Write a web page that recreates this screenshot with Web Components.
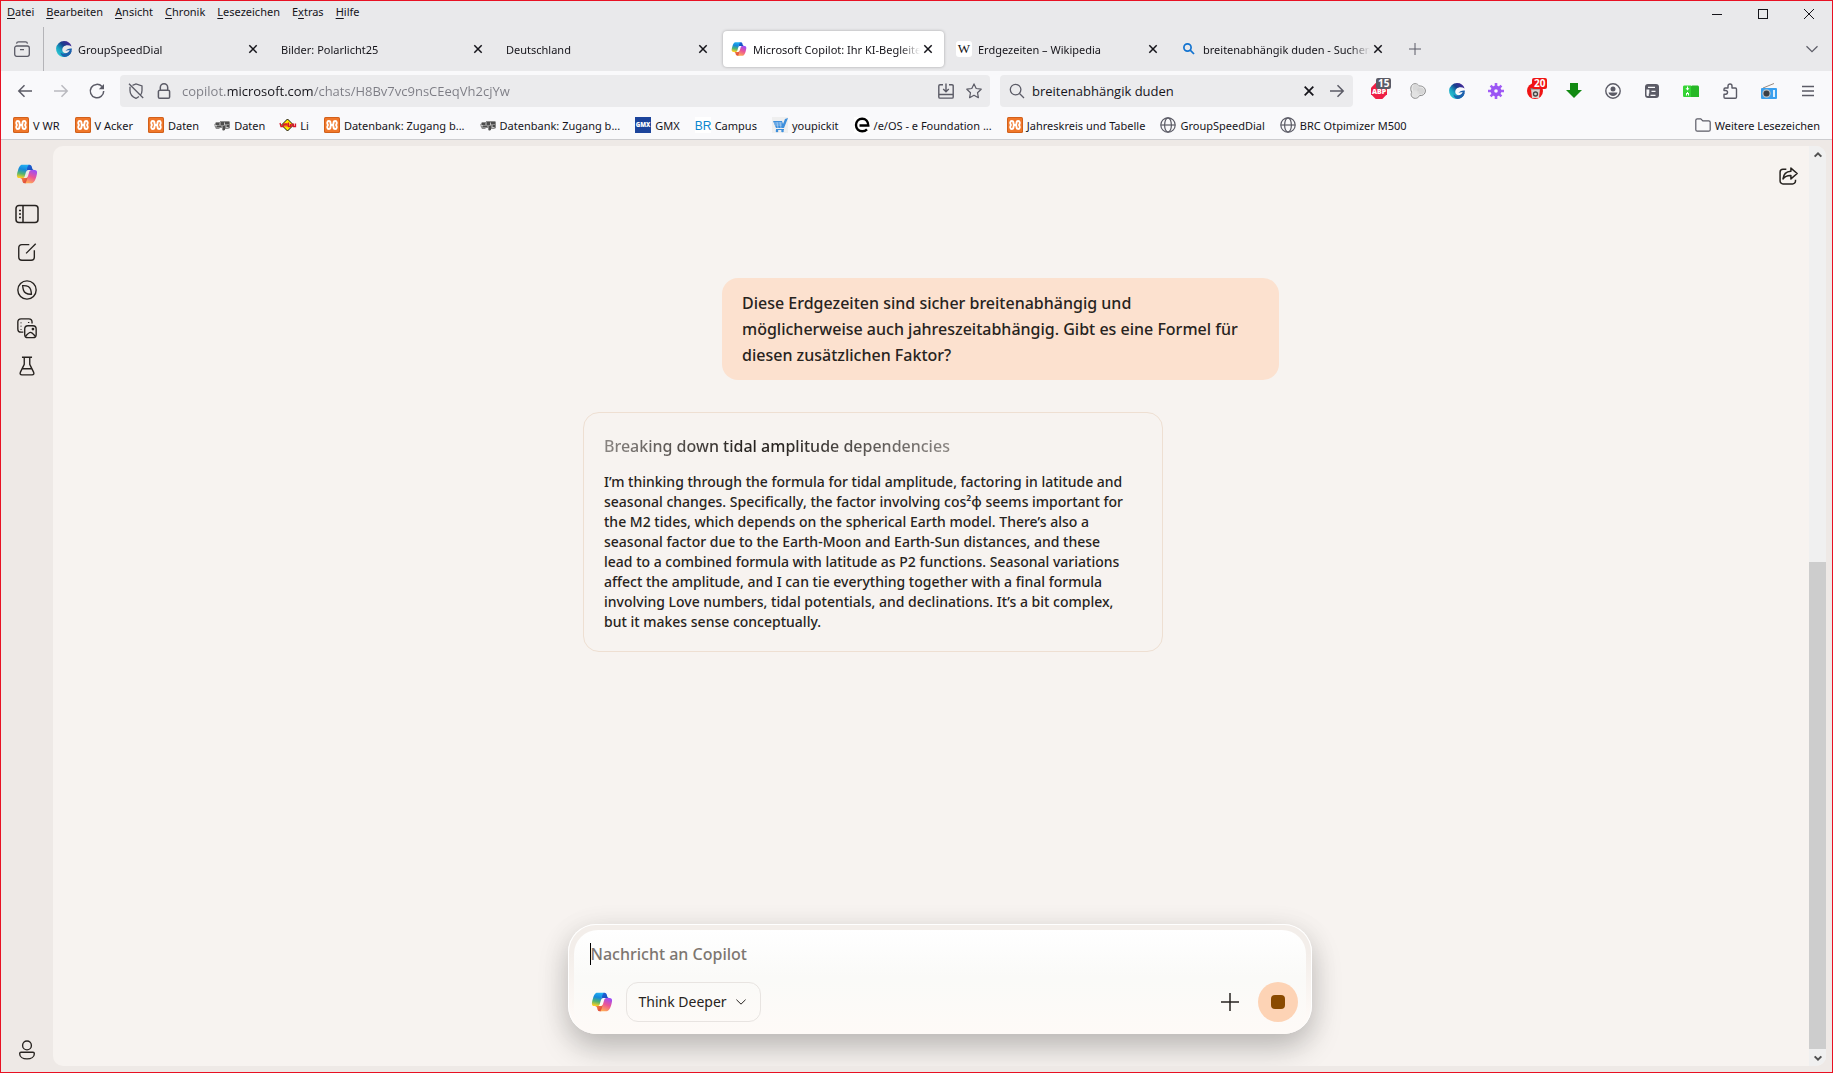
<!DOCTYPE html>
<html lang="de">
<head>
<meta charset="utf-8">
<title>Microsoft Copilot: Ihr KI-Begleiter</title>
<style>
    body { margin: 0; }
</style>
</head>
<body>
<browser-window></browser-window>

<script>
// 1. Icons
const copilotMark = `
    <defs>
        <linearGradient id="a" x1="0" y1="0" x2="1" y2="1"><stop offset="0" stop-color="#1a6be0"/><stop offset="1" stop-color="#1b3fae"/></linearGradient>
        <linearGradient id="b" x1="0" y1="0" x2="1" y2="1"><stop offset="0" stop-color="#ffa23e"/><stop offset="1" stop-color="#d8343c"/></linearGradient>
        <linearGradient id="c" x1=".6" y1="0" x2=".4" y2="1"><stop offset="0" stop-color="#22b0f2"/><stop offset=".35" stop-color="#1589dc"/><stop offset=".68" stop-color="#52b471"/><stop offset="1" stop-color="#ffd021"/></linearGradient>
        <linearGradient id="d" x1=".7" y1="0" x2=".3" y2="1"><stop offset="0" stop-color="#9a4dfa"/><stop offset=".5" stop-color="#ec5594"/><stop offset="1" stop-color="#ffad55"/></linearGradient>
    </defs>
    <path fill="url(#a)" d="M34.142 7.325A4.63 4.63 0 0 0 29.7 4h-1.35a4.63 4.63 0 0 0-4.554 3.794L21.48 20.407l.575-1.965a4.63 4.63 0 0 1 4.444-3.33h7.853l3.294 1.282 3.175-1.283h-.926a4.63 4.63 0 0 1-4.443-3.325z"/>
    <path fill="url(#b)" d="M14.33 40.656A4.63 4.63 0 0 0 18.779 44h2.87a4.63 4.63 0 0 0 4.629-4.51l.312-12.163-.654 2.233a4.63 4.63 0 0 1-4.443 3.329h-7.919l-2.823-1.532-3.057 1.532h.912a4.63 4.63 0 0 1 4.447 3.344z"/>
    <path fill="url(#c)" d="M29.5 4H13.46c-4.583 0-7.332 6.057-9.165 12.113-2.172 7.176-5.014 16.775 3.207 16.775h6.925a4.63 4.63 0 0 0 4.456-3.358 2078.617 2078.617 0 0 1 4.971-17.156c.843-2.843 1.544-5.284 2.621-6.805C27.08 4.717 28.086 4 29.5 4z"/>
    <path fill="url(#d)" d="M18.498 44h16.04c4.582 0 7.332-6.058 9.165-12.115 2.171-7.177 5.013-16.775-3.208-16.775h-6.926a4.63 4.63 0 0 0-4.455 3.358 2084.036 2084.036 0 0 1-4.972 17.159c-.842 2.843-1.544 5.285-2.62 6.806-.604.852-1.61 1.567-3.024 1.567z"/>`;

const speedDialMark = `
    <defs>
        <linearGradient id="a" x1="1" y1="0" x2="0" y2="1"><stop offset="0" stop-color="#5a1a9c"/><stop offset=".4" stop-color="#17408c"/><stop offset=".65" stop-color="#18a5c4"/><stop offset="1" stop-color="#3cd6d8"/></linearGradient>
    </defs>
    <path fill="url(#a)" d="M8 0a8 8 0 0 1 7.600 5.500C13 3.600 9.500 3.800 7.500 5.700 5.500 7.700 6 11 8.500 12c2 .8 5-.1 7.300-2A8 8 0 1 1 8 0z"/>
    <path fill="#1c62ae" d="M15.900 7.500c0 5-3.500 8.200-7.500 8.400-2.400-.5-3.800-2.300-3.900-4.300 2.500 2.200 7.700 1.400 9.200-2.500l-4.200.7c1.200-1.700 3.500-2.700 6.400-2.300z"/>`;

// name: [viewBox, markup]
const icons = {
    copilot: ['0 2 48 44', copilotMark],
    speeddial: ['0 0 16 16', speedDialMark],
    close: ['0 0 12 12', '<path class="s" stroke-width="1.500" d="M2.300 2.300l7.400 7.400M9.700 2.300l-7.400 7.400"/>'],
    plus: ['0 0 12 12', '<path class="s" d="M6 0v12M0 6h12"/>'],
    down: ['0 0 12 12', '<path class="s" stroke-width="1.200" d="M.5 3.200L6 8.600l5.500-5.400"/>'],
    minimize: ['0 0 12 12', '<path class="s" shape-rendering="crispEdges" d="M1 6.500h10"/>'],
    maximize: ['0 0 12 12', '<path class="s" shape-rendering="crispEdges" d="M1.500 1.500h9v9h-9z"/>'],
    quit: ['0 0 12 12', '<path class="s" d="M1 1l10 10M11 1L1 11"/>'],
    archive: ['0 0 16 16', '<path class="s" stroke-width="1.300" d="M.7 7A2 2 0 0 1 2.700 5h10.600a2 2 0 0 1 2 2v6.300a2 2 0 0 1-2 2H2.700a2 2 0 0 1-2-2zM2.500 2.600C2.700 1.400 3.400.8 4.500.8h7c1.100 0 1.800.6 2 1.800M6 8.600h4"/>'],
    back: ['0 0 16 16', '<path class="s" stroke-width="1.500" d="M15 8H2M7.500 2.300L1.800 8l5.700 5.700"/>'],
    forward: ['0 0 16 16', '<path class="s" stroke-width="1.500" d="M1 8h13M8.500 2.300L14.200 8l-5.700 5.700"/>'],
    reload: ['0 0 16 16', '<path class="s" stroke-width="1.500" d="M13 3.600A6.700 6.700 0 1 0 14.700 8"/><path fill="currentColor" d="M15 1v5.200H9.800z"/>'],
    shield: ['0 0 16 16', '<path class="s" stroke-width="1.300" d="M4.500 2.300L8 1l6 2v4.500c0 1.700-.5 3.100-1.400 4.300M10.900 13.500C10 14.300 9 14.900 8 15.300 4.700 14 2 11 2 7.500V3.700M1 .8l14.200 14.200"/>'],
    lock: ['0 0 16 16', '<path class="s" stroke-width="1.500" d="M4.300 7.300V4.400a3.700 3.700 0 0 1 7.400 0v2.900M3.700 7.300h8.600a1.300 1.300 0 0 1 1.300 1.300v5.400a1.300 1.300 0 0 1-1.300 1.300H3.700A1.300 1.300 0 0 1 2.400 14V8.600a1.300 1.300 0 0 1 1.300-1.300z"/>'],
    install: ['0 0 16 16', '<path class="s" stroke-width="1.400" d="M5 1.700H2A1.200 1.200 0 0 0 .8 2.900v11c0 .7.5 1.200 1.200 1.200h12c.7 0 1.200-.5 1.200-1.200v-11c0-.7-.5-1.200-1.200-1.200h-3M8 .5v8M5.200 6L8 8.700 10.800 6M1 11.500h14"/>'],
    star: ['0 0 16 16', '<path class="s" stroke-width="1.200" stroke-linejoin="round" d="M8 .9l2.200 4.600 5 .7-3.700 3.500.9 5L8 12.300l-4.400 2.400.9-5L.8 6.200l5-.7z"/>'],
    search: ['0 0 16 16', '<circle class="s" stroke-width="1.300" cx="6.600" cy="6.600" r="5.300"/><path class="s" stroke-width="1.300" d="M10.500 10.500l4.500 4.500"/>'],
    find: ['0 0 16 16', '<circle class="s" stroke-width="1.700" cx="6.500" cy="6.500" r="3.600"/><path class="s" stroke-width="1.700" d="M9.200 9.200l3.800 3.800"/>'],
    wikipedia: ['0 0 16 16', '<rect width="16" height="16" rx="3" fill="#fff"/><text x="8" y="12" text-anchor="middle" font-family="Liberation Serif, serif" font-size="13" fill="#111">W</text>'],
    xampp: ['0 0 16 16', '<rect width="16" height="16" rx="1.500" fill="#d2601a"/><rect x="1" y="1" width="14" height="14" rx="1" fill="#f0772a"/><path fill="none" stroke="#fff" stroke-width="1.900" stroke-linejoin="round" d="M4 8C2.800 6.500 3 4 4.800 4c1.500 0 1.700 1 1.700 2.300C6.500 7.500 7 8 8 8s1.500-.5 1.500-1.700C9.500 5 9.700 4 11.200 4 13 4 13.200 6.500 12 8c1.200 1.500 1 4-.8 4-1.500 0-1.700-1-1.700-2.300C9.500 8.500 9 8 8 8s-1.500.5-1.500 1.700C6.500 11 6.300 12 4.800 12 3 12 2.800 9.500 4 8z"/>'],
    tractor: ['0 0 16 16', '<path fill="#8b8b8b" d="M0 8l2-3h4V4h9l1 1v6l-2 1h-3l-1 2-2-1v-2H6L5 12H2z"/><path fill="#4d4d4d" d="M2 6h3v2H2zM7 5h3v3H7zM11 5h4v2h-4zM3 9h4v1H3zM9 9h2v4H9zM13 8h2v2h-2z"/><path fill="#c3c3c3" d="M0 8h3v1H0zM10 6h1v2h-1zM12 10h2v1h-2z"/>'],
    li: ['0 0 16 16', '<path fill="#ffe800" stroke="#111" d="M7.500 2L13.500 8l-6 6-6-6z"/><path fill="none" stroke="#d8152c" stroke-width="1.300" d="M0 6l1 3.500h2L4 6.500M5 9.500V7h2v2.500M8.500 5.500v4h2V7M12 6.500v3M13.500 6.500v3h2v-3"/>'],
    gmx: ['0 0 16 16', '<rect width="16" height="16" fill="#1c449b"/><text x="8" y="10" text-anchor="middle" font-family="Open Sans, sans-serif" font-weight="800" font-size="6" fill="#fff">GMX</text>'],
    br: ['0 0 16 16', '<rect width="16" height="16" fill="#fff"/><text x="8" y="13" text-anchor="middle" font-family="Liberation Sans, sans-serif" font-size="12" fill="#0c86cf">BR</text>'],
    cart: ['0 0 16 16', '<rect width="16" height="16" fill="#efefef"/><path fill="#3d8fdc" d="M1 4h9l1 3 2-5 3-1-4 10H4z"/><path stroke="#a9cdf0" stroke-width=".8" d="M2 6h8M3 8h7M5 5l1 6M8 5l1 6"/><path stroke="#3d8fdc" d="M4 12.500h8"/><circle cx="5" cy="14" r="1.300" fill="#3d8fdc"/><circle cx="10.500" cy="14" r="1.300" fill="#3d8fdc"/>'],
    eos: ['0 0 16 16', '<rect width="16" height="16" fill="#fff"/><path fill="none" stroke="#000" stroke-width="2.400" d="M5.500 8.500h8.800C14.300 4.300 11.600 1.700 8.200 1.700A6.100 6.100 0 0 0 2 8c0 3.700 2.800 6.300 6.200 6.300 1.900 0 3.500-.6 4.800-1.900"/>'],
    globe: ['0 0 16 16', '<circle class="s" stroke-width="1.200" cx="8" cy="8" r="7.200"/><ellipse class="s" stroke-width="1.200" cx="8" cy="8" rx="3.400" ry="7.200"/><path class="s" stroke-width="1.200" d="M.8 8h14.400"/>'],
    folder: ['0 0 16 16', '<path class="s" stroke-width="1.200" d="M.8 3.300c0-.9.600-1.500 1.500-1.500h3.500l2 2h5.900c.9 0 1.500.6 1.500 1.500v7.400c0 .9-.6 1.500-1.500 1.500H2.300c-.9 0-1.500-.6-1.500-1.500z"/>'],
    abp: ['0 0 16 16', '<path fill="#ee1f45" d="M4.700 0h6.600L16 4.700v6.600L11.300 16H4.700L0 11.300V4.700z"/><text x="8" y="11" text-anchor="middle" font-family="Open Sans, sans-serif" font-weight="800" font-size="7" fill="#fff">ABP</text>'],
    blobs: ['0 0 16 16', '<path fill="#ededed" stroke="#8a8a8a" d="M5 .7c2 0 3.300.9 4 2.300 3.800-.4 6.400 2 6.400 5s-2.700 5-5.900 4.600c-.9 1.700-2.300 2.700-4.200 2.700-3.700 0-5-3.500-3.600-6C-.2 6 .8.700 5 .7z"/><circle cx="6" cy="5" r="3.600" fill="#d9d9d9"/><circle cx="10.500" cy="8" r="3.600" fill="#cfcfcf" opacity=".8"/><circle cx="5.500" cy="10.500" r="3.600" fill="#dedede" opacity=".8"/>'],
    gear: ['0 0 16 16', '<g stroke="#a25df5" stroke-width="2.600"><path d="M8 0v16M0 8h16"/><path d="M2.600 2.600l10.800 10.800M13.400 2.600L2.600 13.400"/></g><circle cx="8" cy="8" r="5.400" fill="#9a55f4"/><circle cx="8" cy="8" r="1.800" fill="#f9f9fb"/>'],
    trash: ['0 0 16 16', '<circle cx="8" cy="8" r="8" fill="#f01414"/><path fill="#d9d2cf" d="M4 6h9l-1 9H5z"/><path fill="#7d7d7d" d="M3.500 5h10v1.500h-10z"/><circle cx="8.500" cy="11" r="2" fill="none" stroke="#444" stroke-width="1.300"/>'],
    download: ['0 0 16 16', '<path fill="#128a12" d="M4 0h8v7h4l-8 8-8-8h4z"/>'],
    account: ['0 0 16 16', '<circle class="s" stroke-width="1.400" cx="8" cy="8" r="7.200"/><circle cx="8" cy="6" r="2.500" fill="currentColor"/><path fill="currentColor" d="M3.500 9.500h9c-.4 2.200-2.200 3.500-4.500 3.500s-4.100-1.300-4.500-3.500z"/>'],
    panel: ['0 0 16 16', '<rect x="1" y="1" width="14" height="14" rx="3" fill="currentColor"/><path fill="#f9f9fb" d="M4 3.800h7v1.200H4zM2.500 6.500h2.800v4H4.800v2.500H3.500a1 1 0 0 1-1-1zM7.500 7.800h4v1.200h-4zM6.500 11.700h5v1.200h-5z"/>'],
    save: ['0 0 16 16', '<path fill="#27b827" d="M7 4l2-1.500h5c1.500 0 2 .5 2 2V14H7z"/><path fill="#35d435" d="M0 4c0-1 .5-1.500 1.500-1.500H8V14H1.500C.5 14 0 13.500 0 12.500z"/><path fill="#fff" d="M4 3.500h1v1.700h1.500L4.500 7.500l-2-2.300H4zM4 9h1v1h1v1H3v-1h1zM3 11h1v1.500H3zM5 11h1v1.500H5z"/>'],
    puzzle: ['0 0 16 16', '<path class="s" stroke-width="1.400" stroke-linejoin="round" d="M6 5V3a2 2 0 0 1 4 0v2h3.300c.7 0 1.200.5 1.200 1.200v7.900c0 .7-.5 1.200-1.200 1.200H3.200c-.7 0-1.200-.5-1.200-1.200v-2.900h1.700a1.800 1.800 0 0 0 0-3.700H2V6.200C2 5.500 2.500 5 3.200 5z"/>'],
    radio: ['0 0 16 16', '<path stroke="#9a8a80" d="M2 5L13 .5"/><rect y="5" width="16" height="11" rx="1" fill="#3aa0ee"/><circle cx="5.500" cy="10.500" r="4.200" fill="#b8bec4"/><circle cx="5.500" cy="10.500" r="3" fill="#3b3f45"/><path fill="#dff1ff" d="M12 7h2v7h-2z"/>'],
    menu: ['0 0 16 16', '<path class="s" stroke-width="1.300" d="M2 3.500h12M2 8h12M2 12.500h12"/>'],
    sidebar: ['0 0 24 24', '<rect class="s" x="1" y="3.500" width="22" height="17" rx="3"/><path class="s" d="M8 3.500v17M4 8.500h2M4 12h2M4 15.500h2"/>'],
    compose: ['0 0 24 24', '<path class="s" d="M14.500 4H6.500A3.500 3.500 0 0 0 3 7.500v10A3.500 3.500 0 0 0 6.500 21h10a3.500 3.500 0 0 0 3.500-3.500V10M11 13.500L21.500 3"/>'],
    discover: ['0 0 24 24', '<circle class="s" cx="12" cy="12" r="10"/><path class="s" d="M7.300 7.300c4-.2 7.800 1.300 8.700 4.300.5 1.700.7 3.300.8 5-4.200.2-7.500-1-8.600-4.300-.6-1.800-.8-3.300-.9-5z"/>'],
    library: ['0 0 24 24', '<path class="s" d="M8 16.500H5.500A3.500 3.500 0 0 1 2 13V5.500A3.500 3.500 0 0 1 5.500 2H14a3.500 3.500 0 0 1 3.500 3.500V7M5.500 6v.8M5.500 9.500v.8M5.500 13v.8M13.800 5.500v1"/><rect class="s" x="9.500" y="9.500" width="12.500" height="13" rx="3.500"/><path class="s" d="M10.500 21c2-2.300 3.500-4.200 5.300-4.200s3.200 1.900 5.200 4.200"/><circle cx="18.500" cy="13.200" r="1.500" fill="currentColor"/>'],
    labs: ['0 0 24 24', '<path class="s" stroke-linejoin="round" d="M6.500 2.500h11M9 2.500v7.700L4.700 19c-.6 1.500 0 2.700 1.700 2.700h11.200c1.700 0 2.300-1.200 1.700-2.700L15 10.200V2.500M6.800 15h10.400"/>'],
    person: ['0 0 24 24', '<circle class="s" cx="12" cy="7" r="4.800"/><path class="s" d="M5.500 14.500h13c1 0 1.500.5 1.500 1.500 0 3.500-3.500 5.700-8 5.700S4 19.500 4 16c0-1 .5-1.500 1.500-1.500z"/>'],
    share: ['0 0 24 24', '<path class="s" d="M10 4H6a3.500 3.500 0 0 0-3.500 3.500V18A3.500 3.500 0 0 0 6 21.500h11.500A3.500 3.500 0 0 0 21 18v-1.500"/><path class="s" stroke-linejoin="round" d="M15.500 2.500L23 9l-7.500 6.500v-4c-4-.2-7 .8-9.500 4 .5-5.500 3.500-9 9.500-9.300z"/>'],
    chevup: ['0 0 12 12', '<path class="s" stroke-width="2.400" d="M2 8l4-4 4 4"/>'],
    chevdown: ['0 0 12 12', '<path class="s" stroke-width="2.400" d="M2 4l4 4 4-4"/>']
};

class UiIcon extends HTMLElement {
    connectedCallback() {
        const [box, markup] = icons[this.getAttribute('name')];
        const size = this.getAttribute('size') || 16;
        this.attachShadow({ mode: 'open' }).innerHTML = `
            <style>
                :host { display: block; flex: none; width: ${size}px; height: ${size}px; }
                svg { display: block; width: 100%; height: 100%; overflow: visible; }
                .s { fill: none; stroke: currentColor; }
            </style>
            <svg viewBox="${box}" stroke-width="${this.getAttribute('stroke') || 1}" aria-hidden="true">${markup}</svg>
        `;
    }
}
customElements.define('ui-icon', UiIcon);

// 2. Data
const menus = ['<u>D</u>atei', '<u>B</u>earbeiten', '<u>A</u>nsicht', '<u>C</u>hronik', '<u>L</u>esezeichen', 'E<u>x</u>tras', '<u>H</u>ilfe'];

const tabs = [
    { icon: 'speeddial', title: 'GroupSpeedDial' },
    { title: 'Bilder: Polarlicht25' },
    { title: 'Deutschland' },
    { icon: 'copilot', title: 'Microsoft Copilot: Ihr KI-Begleiter', active: true },
    { icon: 'wikipedia', title: 'Erdgezeiten – Wikipedia' },
    { icon: 'find', title: 'breitenabhängik duden - Suchen' }
];

const bookmarks = [
    ['xampp', 'V WR'], ['xampp', 'V Acker'], ['xampp', 'Daten'], ['tractor', 'Daten'], ['li', 'Li'],
    ['xampp', 'Datenbank: Zugang b...'], ['tractor', 'Datenbank: Zugang b...'], ['gmx', 'GMX'],
    ['br', 'Campus'], ['cart', 'youpickit'], ['eos', '/e/OS - e Foundation ...'],
    ['xampp', 'Jahreskreis und Tabelle'], ['globe', 'GroupSpeedDial'], ['globe', 'BRC Otpimizer M500']
];

const extensions = [
    ['abp', 'Adblock Plus', '15', '#5b5b66'], ['blobs', 'Container'], ['speeddial', 'GroupSpeedDial'],
    ['gear', 'Einstellungen'], ['trash', 'Cookies', '20', '#f01414'], ['download', 'Downloads'],
    ['account', 'Konto'], ['panel', 'Fenster'], ['save', 'Speichern'], ['puzzle', 'Erweiterungen'],
    ['radio', 'Radio'], ['menu', 'Menü']
];

const buttonReset = `
    button { margin: 0; padding: 0; border: 0; background: none; font: inherit; color: inherit; display: flex; align-items: center; justify-content: center; }
    input, textarea { margin: 0; padding: 0; border: 0; outline: 0; background: none; font: inherit; color: inherit; }
`;

// 3. Browser chrome
class MenuBar extends HTMLElement {
    constructor() {
        super();
        this.attachShadow({ mode: 'open' }).innerHTML = `
            <style>
                ${buttonReset}
                :host { display: flex; justify-content: space-between; height: 26px; background: #e9e9eb; }
                nav { display: flex; gap: 12px; padding-left: 6px; align-items: flex-start; }
                nav button { line-height: 22px; display: block; }
                u { text-underline-offset: 2px; }
                .window { display: flex; }
                .window button { width: 46px; }
            </style>
            <nav>${menus.map(m => `<button>${m}</button>`).join('')}</nav>
            <div class="window">
                <button aria-label="Minimieren"><ui-icon name="minimize" size="12"></ui-icon></button>
                <button aria-label="Maximieren"><ui-icon name="maximize" size="12"></ui-icon></button>
                <button aria-label="Schließen"><ui-icon name="quit" size="12"></ui-icon></button>
            </div>
        `;
    }
}
customElements.define('menu-bar', MenuBar);

class BrowserTab extends HTMLElement {
    constructor() {
        super();
        this.attachShadow({ mode: 'open' }).innerHTML = `
            <style>
                ${buttonReset}
                :host { display: flex; align-items: center; gap: 6px; box-sizing: border-box; flex: 1; min-width: 0; height: 36px; padding: 0 8px; border-radius: 4px; }
                :host([active]) { background: #fff; box-shadow: 0 0 3px rgba(0, 0, 0, 0.3); }
                .title { flex: 1; min-width: 0; overflow: hidden; white-space: nowrap; line-height: 18px; padding-top: 2px; -webkit-mask-image: linear-gradient(to left, transparent, #000 20px); mask-image: linear-gradient(to left, transparent, #000 20px); margin-right: -6px; }
                button { flex: none; width: 16px; height: 16px; }
            </style>
            <slot name="icon"></slot>
            <span class="title"><slot></slot></span>
            <button aria-label="Tab schließen"><ui-icon name="close" size="12"></ui-icon></button>
        `;
    }
}
customElements.define('browser-tab', BrowserTab);

class TabStrip extends HTMLElement {
    constructor() {
        super();
        this.attachShadow({ mode: 'open' }).innerHTML = `
            <style>
                ${buttonReset}
                :host { display: flex; height: 44px; align-items: center; background: #e9e9eb; }
                .view { width: 43px; height: 44px; box-sizing: border-box; border-right: 1px solid #b4b4b8; color: #5b5b66; }
                .tabs { display: flex; flex: 0 1 1346px; gap: 4px; margin-left: 4px; min-width: 0; }
                .add { width: 42px; height: 36px; color: #5b5b66; }
                .list { width: 40px; height: 36px; margin-left: auto; color: #5b5b66; }
                [name="find"] { color: #1273d0; }
            </style>
            <button class="view" aria-label="Firefox View"><ui-icon name="archive"></ui-icon></button>
            <div class="tabs" role="tablist">
                ${tabs.map(t => `<browser-tab role="tab" ${t.active ? 'active' : ''}>${t.icon ? `<ui-icon slot="icon" name="${t.icon}"></ui-icon>` : ''}${t.title}</browser-tab>`).join('')}
            </div>
            <button class="add" aria-label="Neuer Tab"><ui-icon name="plus" size="12"></ui-icon></button>
            <button class="list" aria-label="Alle Tabs"><ui-icon name="down" size="12"></ui-icon></button>
        `;
    }
}
customElements.define('tab-strip', TabStrip);

class NavBar extends HTMLElement {
    constructor() {
        super();
        this.attachShadow({ mode: 'open' }).innerHTML = `
            <style>
                ${buttonReset}
                :host { display: flex; align-items: center; height: 40px; padding: 0 5px 0 6px; background: #f9f9fb; color: #5b5b66; }
                .nav { width: 36px; height: 32px; }
                .nav[disabled] { opacity: 0.4; }
                .field { display: flex; align-items: center; height: 32px; border-radius: 4px; background: #ebebed; font: 13px/20px "Open Sans", sans-serif; }
                .url { flex: 1 1 870px; margin-left: 5px; }
                .search { flex: 0 1 353px; margin: 0 6px 0 10px; }
                .field button { width: 28px; height: 28px; }
                .url button:first-child { margin-left: 2px; }
                .url button:last-child, .search button:last-child { margin-right: 2px; }
                input { flex: 1; min-width: 0; height: 28px; }
                .url input { margin-left: 4px; -webkit-text-fill-color: transparent; background: linear-gradient(to right, #7c7c84 46px, #15141a 46px, #15141a 132px, #7c7c84 132px); -webkit-background-clip: text; background-clip: text; }
                .search input { color: #15141a; }
                .search > ui-icon { margin: 0 7px 0 9px; }
                .tool { position: relative; width: 39px; height: 32px; }
                .badge { position: absolute; top: 3px; left: 17px; padding: 0 2px; border-radius: 2px; color: #fff; font: 700 10px/11px "Open Sans", sans-serif; }
            </style>
            <button class="nav" aria-label="Zurück"><ui-icon name="back"></ui-icon></button>
            <button class="nav" aria-label="Vor" disabled><ui-icon name="forward"></ui-icon></button>
            <button class="nav" aria-label="Neu laden"><ui-icon name="reload"></ui-icon></button>
            <div class="field url">
                <button aria-label="Schutz"><ui-icon name="shield"></ui-icon></button>
                <button aria-label="Verbindung"><ui-icon name="lock"></ui-icon></button>
                <input type="text" aria-label="Adresse" value="copilot.microsoft.com/chats/H8Bv7vc9nsCEeqVh2cjYw">
                <button aria-label="Installieren"><ui-icon name="install"></ui-icon></button>
                <button aria-label="Lesezeichen"><ui-icon name="star"></ui-icon></button>
            </div>
            <div class="field search">
                <ui-icon name="search"></ui-icon>
                <input type="text" aria-label="Suchen" value="breitenabhängik duden">
                <button aria-label="Leeren"><ui-icon name="close" size="14" style="color: #15141a"></ui-icon></button>
                <button aria-label="Suchen"><ui-icon name="forward"></ui-icon></button>
            </div>
            ${extensions.map(([icon, label, count, color]) => `
                <button class="tool" aria-label="${label}"><ui-icon name="${icon}"></ui-icon>${count ? `<span class="badge" style="background: ${color}">${count}</span>` : ''}</button>
            `).join('')}
        `;
    }
}
customElements.define('nav-bar', NavBar);

class BookmarkLink extends HTMLElement {
    constructor() {
        super();
        this.attachShadow({ mode: 'open' }).innerHTML = `
            <style>
                :host { display: block; flex: none; }
                a { display: flex; align-items: center; gap: 4px; color: inherit; text-decoration: none; white-space: nowrap; }
                ::slotted(ui-icon) { color: #5b5b66; }
                span { line-height: 18px; padding-top: 2px; }
            </style>
            <a href="#"><slot name="icon"></slot><span><slot></slot></span></a>
        `;
    }
}
customElements.define('bookmark-link', BookmarkLink);

class BookmarkBar extends HTMLElement {
    constructor() {
        super();
        this.attachShadow({ mode: 'open' }).innerHTML = `
            <style>
                :host { display: flex; align-items: center; gap: 15px; height: 28px; padding: 0 12px; background: #f9f9fb; border-bottom: 1px solid #cccccf; }
                .more { margin-left: auto; }
            </style>
            ${bookmarks.map(([icon, label]) => `<bookmark-link><ui-icon slot="icon" name="${icon}"></ui-icon>${label}</bookmark-link>`).join('')}
            <bookmark-link class="more"><ui-icon slot="icon" name="folder"></ui-icon>Weitere Lesezeichen</bookmark-link>
        `;
    }
}
customElements.define('bookmark-bar', BookmarkBar);

// 4. Copilot page
class SideRail extends HTMLElement {
    constructor() {
        super();
        this.attachShadow({ mode: 'open' }).innerHTML = `
            <style>
                ${buttonReset}
                :host { display: flex; flex-direction: column; align-items: center; box-sizing: border-box; width: 52px; padding: 12px 0 3px; color: #272320; }
                button { width: 38px; height: 38px; }
                button:first-of-type { height: 43px; }
                button:last-of-type { margin-top: auto; }
            </style>
            <button aria-label="Startseite"><ui-icon name="copilot" size="22"></ui-icon></button>
            <button aria-label="Seitenleiste"><ui-icon name="sidebar" size="24" stroke="1.500"></ui-icon></button>
            <button aria-label="Neuer Chat"><ui-icon name="compose" size="22" stroke="1.500"></ui-icon></button>
            <button aria-label="Entdecken"><ui-icon name="discover" size="22" stroke="1.500"></ui-icon></button>
            <button aria-label="Bibliothek"><ui-icon name="library" size="22" stroke="1.500"></ui-icon></button>
            <button aria-label="Labs"><ui-icon name="labs" size="22" stroke="1.500"></ui-icon></button>
            <button aria-label="Profil"><ui-icon name="person" size="22" stroke="1.500"></ui-icon></button>
        `;
    }
}
customElements.define('side-rail', SideRail);

class UserMessage extends HTMLElement {
    constructor() {
        super();
        this.attachShadow({ mode: 'open' }).innerHTML = `
            <style>
                :host { display: block; box-sizing: border-box; width: 557px; max-width: 100%; padding: 12px 20px; border-radius: 16px; background: #fce1cf; line-height: 26px; }
            </style>
            <slot></slot>
        `;
    }
}
customElements.define('user-message', UserMessage);

class ThoughtCard extends HTMLElement {
    constructor() {
        super();
        this.attachShadow({ mode: 'open' }).innerHTML = `
            <style>
                :host { display: block; box-sizing: border-box; width: 580px; max-width: 100%; padding: 20px 20px 19px; border: 1px solid #eedfd2; border-radius: 16px; font-size: 14px; line-height: 20px; }
                h2 { width: max-content; margin: 0 0 13px; font-size: 16px; line-height: 26px; font-weight: inherit; color: transparent; background: linear-gradient(to right, #8a8582, #272320 40%, #272320 50%, #8a8582); -webkit-background-clip: text; background-clip: text; }
                p { margin: 0; }
            </style>
            <h2><slot name="title"></slot></h2>
            <p><slot></slot></p>
        `;
    }
}
customElements.define('thought-card', ThoughtCard);

class ScrollTrack extends HTMLElement {
    constructor() {
        super();
        this.attachShadow({ mode: 'open' }).innerHTML = `
            <style>
                ${buttonReset}
                :host { display: flex; flex-direction: column; width: 17px; background: #f0f0f0; color: #505050; }
                button { height: 17px; }
                .space { flex: 45; }
                .thumb { flex: 55; background: #cdcdcd; }
            </style>
            <button aria-label="Nach oben"><ui-icon name="chevup" size="10"></ui-icon></button>
            <div class="space"></div>
            <div class="thumb"></div>
            <button aria-label="Nach unten"><ui-icon name="chevdown" size="10"></ui-icon></button>
        `;
    }
}
customElements.define('scroll-track', ScrollTrack);

class ChatComposer extends HTMLElement {
    constructor() {
        super();
        this.attachShadow({ mode: 'open' }).innerHTML = `
            <style>
                ${buttonReset}
                :host {
                    display: block;
                    box-sizing: border-box;
                    width: 744px;
                    max-width: 90%;
                    padding: 5px 5px 0;
                    border: 1px solid #fff;
                    border-bottom: 0;
                    border-radius: 28px;
                    background: linear-gradient(to bottom, #f3eeea 25%, #fefaf7 85%);
                    box-shadow: 0 14px 30px rgba(0, 0, 0, 0.22), 0 4px 32px rgba(0, 0, 0, 0.06);
                }
                .panel { display: flex; flex-direction: column; gap: 13px; padding: 9px 8px 12px 17px; border-radius: 24px; background: linear-gradient(to bottom, #fff, #fafaf8 45%, #fefaf7); }
                .entry { display: flex; align-items: center; margin-left: -1px; }
                .caret { width: 1px; height: 22px; background: #000; }
                textarea { flex: 1; height: 30px; line-height: 30px; resize: none; overflow: hidden; }
                textarea::placeholder { color: #7d7670; opacity: 1; }
                .actions { display: flex; align-items: center; }
                .mode { gap: 9px; height: 40px; margin-left: 13px; padding: 0 14px 0 12px; box-sizing: border-box; border: 1px solid #e8e4e1; border-radius: 12px; font-size: 14px; font-weight: 400; }
                .add { margin-left: auto; width: 40px; height: 40px; }
                .stop { width: 40px; height: 40px; margin-left: 8px; border-radius: 50%; background: #fdd3b5; }
                .stop span { width: 14px; height: 14px; border-radius: 4px; background: #8a4a00; }
            </style>
            <div class="panel">
                <div class="entry"><span class="caret"></span><textarea rows="1" aria-label="Nachricht an Copilot" placeholder="Nachricht an Copilot"></textarea></div>
                <div class="actions">
                    <ui-icon name="copilot" size="22"></ui-icon>
                    <button class="mode">Think Deeper<ui-icon name="down" size="10"></ui-icon></button>
                    <button class="add" aria-label="Hinzufügen"><ui-icon name="plus" size="18"></ui-icon></button>
                    <button class="stop" aria-label="Stopp"><span></span></button>
                </div>
            </div>
        `;
    }
}
customElements.define('chat-composer', ChatComposer);

class CopilotPage extends HTMLElement {
    constructor() {
        super();
        this.attachShadow({ mode: 'open' }).innerHTML = `
            <style>
                ${buttonReset}
                :host { display: flex; min-height: 0; background: #eee9e6; color: #272320; font: 500 16px/26px "Noto Sans", sans-serif; }
                main { flex: 1; display: grid; grid-template: 1fr auto / 1fr 17px; min-width: 0; margin: 6px 6px 6px 0; border-radius: 10px; overflow: hidden; background: #f7f3f0; }
                .chat { display: grid; grid-template-columns: 1fr minmax(0, 696px) 1fr; min-height: 0; }
                .thread { grid-column: 2; display: flex; flex-direction: column; gap: 32px; padding-top: 132px; }
                user-message { align-self: flex-end; }
                thought-card { align-self: flex-start; }
                .share { justify-self: end; width: 20px; height: 20px; margin: 20px 11px 0 0; }
                scroll-track { grid-area: 1 / 2 / 3 / 3; }
                chat-composer { grid-area: 2 / 1 / 3 / 3; justify-self: center; margin-bottom: 32px; }
            </style>
            <side-rail></side-rail>
            <main>
                <div class="chat">
                    <div class="thread">
                        <user-message>
                            Diese Erdgezeiten sind sicher breitenabhängig und<br>
                            möglicherweise auch jahreszeitabhängig. Gibt es eine Formel für<br>
                            diesen zusätzlichen Faktor?
                        </user-message>
                        <thought-card>
                            <span slot="title">Breaking down tidal amplitude dependencies</span>
                            I’m thinking through the formula for tidal amplitude, factoring in latitude and<br>
                            seasonal changes. Specifically, the factor involving cos²φ seems important for<br>
                            the M2 tides, which depends on the spherical Earth model. There’s also a<br>
                            seasonal factor due to the Earth-Moon and Earth-Sun distances, and these<br>
                            lead to a combined formula with latitude as P2 functions. Seasonal variations<br>
                            affect the amplitude, and I can tie everything together with a final formula<br>
                            involving Love numbers, tidal potentials, and declinations. It’s a bit complex,<br>
                            but it makes sense conceptually.
                        </thought-card>
                    </div>
                    <button class="share" aria-label="Teilen"><ui-icon name="share" size="20" stroke="1.800"></ui-icon></button>
                </div>
                <scroll-track></scroll-track>
                <chat-composer></chat-composer>
            </main>
        `;
    }
}
customElements.define('copilot-page', CopilotPage);

// 5. Window
class BrowserWindow extends HTMLElement {
    constructor() {
        super();
        this.attachShadow({ mode: 'open' }).innerHTML = `
            <style>
                :host { display: flex; flex-direction: column; box-sizing: border-box; height: 100vh; border: 1px solid #e81123; color: #15141a; font: 11px/16px "Noto Sans", sans-serif; }
                copilot-page { flex: 1; }
            </style>
            <menu-bar></menu-bar>
            <tab-strip></tab-strip>
            <nav-bar></nav-bar>
            <bookmark-bar></bookmark-bar>
            <copilot-page></copilot-page>
        `;
    }
}
customElements.define('browser-window', BrowserWindow);
</script>
</body>
</html>
